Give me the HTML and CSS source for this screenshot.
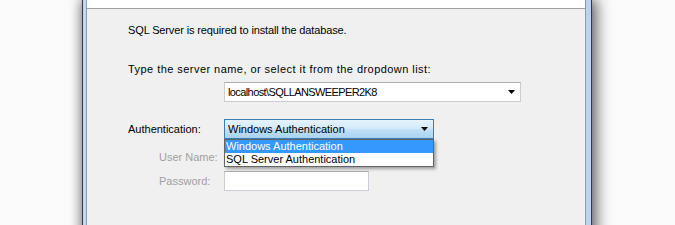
FILE: index.html
```html
<!DOCTYPE html>
<html>
<head>
<meta charset="utf-8">
<link rel="stylesheet" href="styles.css">
</head>
<body>
<div class="desk">
  <div class="window">
    <div class="client">
      <div class="header"></div>
      <div class="content">
        <p class="intro">SQL Server is required to install the database.</p>
        <p class="prompt">Type the server name, or select it from the dropdown list:</p>
        <div class="combo server"><span class="value">localhost\SQLLANSWEEPER2K8</span><i class="arrow"></i></div>
        <div class="row auth-row">
          <span class="label">Authentication:</span>
          <div class="combo hot">
            <span class="value">Windows Authentication</span><i class="arrow"></i>
            <ul class="list">
              <li class="sel">Windows Authentication</li>
              <li>SQL Server Authentication</li>
            </ul>
          </div>
        </div>
        <div class="row user-row">
          <span class="label sub">User Name:</span>
          <div class="textbox"></div>
        </div>
        <div class="row pass-row">
          <span class="label sub">Password:</span>
          <div class="textbox"></div>
        </div>
      </div>
    </div>
  </div>
</div>
</body>
</html>
```
FILE: styles.css
```css
html, body {
  margin: 0;
  height: 100%;
  overflow: hidden;
}
body {
  background: #fbfbfb;
  font-family: "Liberation Sans", Arial, sans-serif;
  font-size: 11px;
  color: #000;
}
.desk {
  padding-left: 82px;
  height: 225px;
}
.window {
  width: 500px;
  height: 260px;
  border: 1px solid #2f3a48;
  border-top: none;
  padding: 0 5px 0 3px;
  background: linear-gradient(to right, #c3d8f1, #d3e3f6 40%, #bcd2ee);
  box-shadow: 4px 0 14px 1px rgba(0, 0, 0, 0.55), -2px 0 10px rgba(0, 0, 0, 0.25);
  display: flex;
}
.client {
  flex: 1;
  border-left: 1px solid #8b9cb2;
  border-right: 1px solid #8b9cb2;
  background: #f0f0f0;
  display: flex;
  flex-direction: column;
}
.header {
  height: 8px;
  background: #fff;
  border-bottom: 1px solid #a0a0a0;
}
.content {
  padding-left: 41px;
  display: flex;
  flex-direction: column;
  align-items: flex-start;
}
.intro, .prompt {
  margin: 0;
  line-height: 13px;
  white-space: nowrap;
}
.intro {
  margin-top: 15px;
  letter-spacing: -0.13px;
}
.prompt {
  margin-top: 26px;
  letter-spacing: 0.45px;
}
.combo {
  position: relative;
  box-sizing: border-box;
  height: 20px;
  display: flex;
  align-items: center;
  background: #fff;
  border: 1px solid #c9ccd2;
  border-top-color: #abadb3;
}
.combo .value {
  padding-left: 3px;
  white-space: nowrap;
}
.server .value {
  letter-spacing: -0.6px;
}
.arrow {
  margin-left: auto;
  margin-right: 5px;
  width: 7px;
  height: 4px;
  background: #000;
  clip-path: polygon(0 0, 100% 0, 50% 100%);
}
.server {
  margin-top: 6px;
  margin-left: 96px;
  width: 297px;
}
.row {
  display: grid;
  grid-template-columns: 96px auto;
  align-items: center;
}
.auth-row { margin-top: 17px; }
.user-row { margin-top: 8px; }
.pass-row { margin-top: 4px; }
.label { white-space: nowrap; }
.label.sub {
  padding-left: 31px;
  color: #a0a0a0;
}
.hot {
  width: 210px;
  border: 1px solid #3c7fb1;
  background: linear-gradient(to bottom, #e6f3fc 0%, #d4eafa 45%, #bfdff6 55%, #a9d3f1 100%);
  z-index: 2;
}
.list {
  position: absolute;
  top: 19px;
  left: -1px;
  width: 210px;
  box-sizing: border-box;
  margin: 0;
  padding: 0;
  list-style: none;
  background: #fff;
  border: 1px solid #646464;
  box-shadow: 2px 2px 3px rgba(0, 0, 0, 0.35);
}
.list li {
  line-height: 13px;
  padding-left: 1px;
  white-space: nowrap;
}
.list li.sel {
  background: #3399ff;
  color: #fff;
}
.textbox {
  box-sizing: border-box;
  width: 145px;
  height: 20px;
  background: #fff;
  border: 1px solid #c9ccd2;
  border-top-color: #abadb3;
}
```
